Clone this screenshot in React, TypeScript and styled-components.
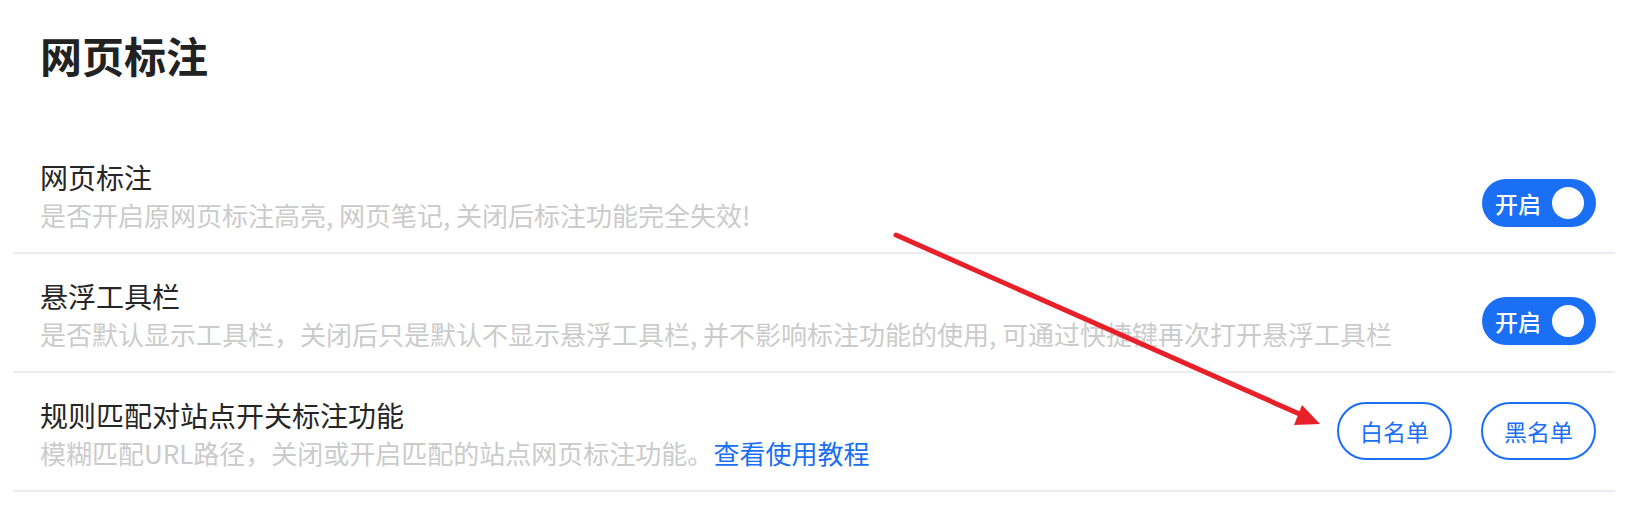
import React from 'react';
import styled, { createGlobalStyle } from 'styled-components';

const GlobalStyle = createGlobalStyle`
    body {
        margin: 0;
        background: #FFF;
        font-family: "Noto Sans CJK SC", "Noto Sans", sans-serif;
    }
`;

const Page = styled.div`
    position: relative;
    width: 1644px;
    height: 524px;
    box-sizing: border-box;
    padding: 0 29px 0 13px;
    background: #FFF;
    overflow: hidden;
`;

const Heading = styled.h1`
    margin: 26px 0 51px 27px;
    font-size: 42px;
    line-height: 58px;
    font-weight: 700;
    color: #222;
`;

const SettingRow = styled.div`
    display: flex;
    align-items: center;
    justify-content: space-between;
    padding: 23px 19px 18px 27px;
    border-bottom: 2px solid #E9EEF4;
`;

const TextBlock = styled.div`
    display: flex;
    flex-direction: column;
`;

const Title = styled.div`
    font-size: 28px;
    line-height: 38px;
    color: #262626;
`;

const Desc = styled.div`
    font-size: 26px;
    line-height: 38px;
    color: #CBCBCB;
    white-space: nowrap;
`;

const Link = styled.a`
    color: #1A6FF5;
    text-decoration: none;
    cursor: pointer;
`;

const Toggle = styled.button<{ $shift: number }>`
    width: 114px;
    height: 48px;
    margin-top: ${p => p.$shift}px;
    padding: 0 12px 0 13px;
    border: none;
    border-radius: 24px;
    background: #1A6FF5;
    display: flex;
    align-items: center;
    justify-content: space-between;
    font-family: inherit;
    font-size: 23px;
    font-weight: 500;
    color: #FFF;
    cursor: pointer;
`;

const Knob = styled.span`
    width: 32px;
    height: 32px;
    border-radius: 50%;
    background: #FFF;
`;

const ButtonGroup = styled.div`
    display: flex;
    gap: 29px;
    margin-bottom: 6px;
`;

const OutlineButton = styled.button`
    width: 115px;
    height: 58px;
    border: 2px solid #1A6FF5;
    border-radius: 29px;
    background: #FFF;
    color: #1A6FF5;
    font-family: inherit;
    font-size: 23px;
    cursor: pointer;
`;

const ArrowLayer = styled.svg`
    position: absolute;
    left: 0;
    top: 0;
    pointer-events: none;
`;

interface ToggleRowProps {
    title: string,
    desc: string,
    shift: number
}

const ToggleRow = ({ title, desc, shift }: ToggleRowProps) => (
    <SettingRow>
        <TextBlock>
            <Title>{title}</Title>
            <Desc>{desc}</Desc>
        </TextBlock>
        <Toggle $shift={shift}>
            开启
            <Knob />
        </Toggle>
    </SettingRow>
);

const App = () => {
    return (
        <Page>
            <GlobalStyle />
            <Heading>网页标注</Heading>
            <ToggleRow
                title="网页标注"
                desc="是否开启原网页标注高亮, 网页笔记, 关闭后标注功能完全失效!"
                shift={14}
            />
            <ToggleRow
                title="悬浮工具栏"
                desc="是否默认显示工具栏，关闭后只是默认不显示悬浮工具栏, 并不影响标注功能的使用, 可通过快捷键再次打开悬浮工具栏"
                shift={12}
            />
            <SettingRow>
                <TextBlock>
                    <Title>规则匹配对站点开关标注功能</Title>
                    <Desc>
                        模糊匹配URL路径，关闭或开启匹配的站点网页标注功能。<Link>查看使用教程</Link>
                    </Desc>
                </TextBlock>
                <ButtonGroup>
                    <OutlineButton>白名单</OutlineButton>
                    <OutlineButton>黑名单</OutlineButton>
                </ButtonGroup>
            </SettingRow>
            {/* annotation arrow drawn over the page */}
            <ArrowLayer width="1644" height="524" viewBox="0 0 1644 524">
                <line x1="896" y1="235" x2="1304" y2="416" stroke="#E8202A" strokeWidth="5" strokeLinecap="round" />
                <polygon points="1320,424 1302,405 1294,425" fill="#E8202A" />
            </ArrowLayer>
        </Page>
    );
};

export default App;
